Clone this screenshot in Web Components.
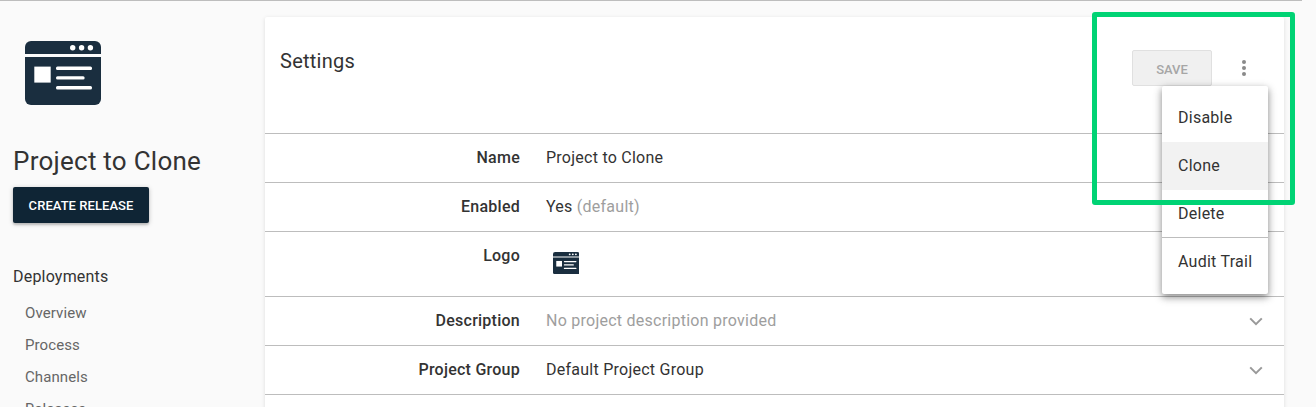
<!DOCTYPE html>
<html lang="en">
<head>
<meta charset="utf-8">
<title>Project to Clone - Settings</title>
<style>
  html, body { margin: 0; height: 407px; overflow: hidden; background: #fafafa; }
  body { font-family: Roboto, "Liberation Sans", sans-serif; color: #333; }
</style>
</head>
<body>
<project-page>
  <project-sidebar slot="side" name="Project to Clone"></project-sidebar>
  <settings-card slot="main" heading="Settings">
    <setting-row label="Name">Project to Clone</setting-row>
    <setting-row label="Enabled">Yes <span style="color:#9e9e9e">(default)</span></setting-row>
    <setting-row label="Logo" tall><project-logo style="width:26.6px;margin:20px 0 0 6.7px"></project-logo></setting-row>
    <setting-row label="Description" expandable><span style="color:#9e9e9e">No project description provided</span></setting-row>
    <setting-row label="Project Group" expandable>Default Project Group</setting-row>
  </settings-card>
</project-page>
<script>
(() => {
  'use strict';

  const define = (name, css, html) => {
    customElements.define(name, class extends HTMLElement {
      constructor() {
        super();
        const root = this.attachShadow({ mode: 'open' });
        root.innerHTML = `<style>${css}</style>${typeof html === 'function' ? html(this) : html}`;
      }
    });
  };

  // window-with-text-lines logo, also used small in the Logo row
  define('project-logo', `
    :host{ display:block; line-height:0; }
    svg{ width:100%; height:auto; display:block; }
  `, `
    <svg viewBox="0 0 76 64" role="img" aria-label="Project logo">
      <path fill="#1a2e3f" d="M0 13V6a6 6 0 0 1 6-6h64a6 6 0 0 1 6 6v7z"/>
      <path fill="#1a2e3f" d="M0 16h76v42a6 6 0 0 1-6 6H6a6 6 0 0 1-6-6z"/>
      <g fill="#fff">
        <circle cx="47.7" cy="6.7" r="2.7"/><circle cx="56.6" cy="6.7" r="2.7"/><circle cx="65.4" cy="6.7" r="2.7"/>
        <rect x="9.3" y="25.6" width="16.4" height="16"/>
        <rect x="31" y="25.6" width="36" height="3.4" rx="1.5"/>
        <rect x="31" y="35.2" width="28.6" height="3.4" rx="1.5"/>
        <rect x="31" y="45" width="36" height="3.4" rx="1.5"/>
      </g>
    </svg>
  `);

  define('project-page', `
    :host{ display:block; width:1302px; height:407px; box-sizing:border-box; border-top:1px solid #bdbdbd; overflow:hidden; position:relative; }
    .wrap{ display:flex; align-items:flex-start; }
    .side{ flex:0 0 265px; }
    .main{ flex:0 0 1019px; padding-top:16px; }
  `, `
    <div class="wrap">
      <div class="side"><slot name="side"></slot></div>
      <div class="main"><slot name="main"></slot></div>
    </div>
  `);

  define('project-sidebar', `
    :host{ display:block; box-sizing:border-box; padding:40px 0 0 13px; }
    project-logo{ width:76px; margin-left:12px; }
    h1{ margin:41px 0 0; font:400 26px/30px Roboto,sans-serif; letter-spacing:.25px; color:#333; white-space:nowrap; }
    button{ display:block; margin-top:11px; width:136px; height:36px; border:0; border-radius:2px; padding:1px 0 0;
      background:#0f2535; color:#fff; font:500 13px/35px Roboto,sans-serif; letter-spacing:.05px;
      box-shadow:0 1px 5px rgba(0,0,0,.22),0 2px 2px rgba(0,0,0,.14); }
    h2{ margin:44px 0 0; font:400 16px/20px Roboto,sans-serif; letter-spacing:.2px; color:#333; }
    ul{ list-style:none; margin:10px 0 0; padding:0 0 0 12px; }
    li{ font:400 15px/32px Roboto,sans-serif; letter-spacing:.1px; color:#666; }
  `, (el) => `
    <project-logo></project-logo>
    <h1>${el.getAttribute('name')}</h1>
    <button>CREATE RELEASE</button>
    <h2>Deployments</h2>
    <ul><li>Overview</li><li>Process</li><li>Channels</li><li>Releases</li></ul>
  `);

  define('settings-card', `
    :host{ display:block; background:#fff; border-radius:2px 2px 0 0; height:400px; position:relative;
      box-shadow:0 1px 4px rgba(0,0,0,.12); }
    header{ display:flex; align-items:flex-start; height:116px; border-bottom:1px solid #bdbdbd; padding:0 16px 0 15px; }
    h3{ margin:31px 0 0; flex:1; font:400 20px/26px Roboto,sans-serif; letter-spacing:.25px; color:#333; }
    .save{ margin-top:33px; width:80px; height:36px; box-sizing:border-box; border:1px solid #e0e0e0; border-radius:2px; padding:3px 0 0;
      background:#f0f0f0; color:#a6a6a6; font:500 13px/31px Roboto,sans-serif; }
    .dots{ margin:33px 0 0 8px; width:48px; height:36px; display:flex; justify-content:center; align-items:center; }
  `, (el) => `
    <header>
      <h3>${el.getAttribute('heading')}</h3>
      <button class="save" disabled>SAVE</button>
      <div class="dots"><svg width="6" height="16" viewBox="0 0 6 16"><g fill="#8a8a8a"><circle cx="3" cy="2" r="2"/><circle cx="3" cy="8" r="2"/><circle cx="3" cy="14" r="2"/></g></svg></div>
    </header>
    <slot></slot>
    <overflow-menu></overflow-menu>
    <highlight-box></highlight-box>
  `);

  define('setting-row', `
    :host{ display:grid; grid-template-columns:255px 1fr 24px; column-gap:26px; height:48px; border-bottom:1px solid #bdbdbd;
      font:400 16px/48px Roboto,sans-serif; letter-spacing:.25px; color:#333; padding-right:16px; }
    :host([tall]){ height:64px; }
    .label{ text-align:right; font-weight:500; white-space:nowrap; }
    :host([tall]) .label{ line-height:47px; }
    .value{ white-space:nowrap; }
    .chev{ display:flex; align-items:center; justify-content:center; }
  `, (el) => `
    <div class="label">${el.getAttribute('label')}</div>
    <div class="value"><slot></slot></div>
    <div class="chev">${el.hasAttribute('expandable')
      ? '<svg width="14" height="9" viewBox="0 0 14 9"><path d="M1.2 1.4 7 7.2l5.8-5.8" fill="none" stroke="#999" stroke-width="2"/></svg>'
      : ''}</div>
  `);

  // open dropdown, lies over the rows
  define('overflow-menu', `
    :host{ display:block; position:absolute; left:897px; top:69px; width:106px; background:#fff; border-radius:2px; padding:8px 0;
      box-shadow:0 3px 10px rgba(0,0,0,.3),0 3px 6px rgba(0,0,0,.22); font:400 16px/48px Roboto,sans-serif; letter-spacing:.25px; color:#333; }
    div{ height:48px; padding-left:16px; white-space:nowrap; }
    .on{ background:#f2f2f2; }
    .sep{ border-bottom:1px solid #bdbdbd; height:47px; }
  `, `
    <div>Disable</div><div class="on">Clone</div><div class="sep">Delete</div><div>Audit Trail</div>
  `);

  // green annotation drawn on top of the screenshot
  define('highlight-box', `
    :host{ display:block; position:absolute; left:827px; top:-5px; width:203px; height:193px; box-sizing:border-box;
      border:5px solid #00d374; border-radius:3px; pointer-events:none; }
  `, ``);
})();
</script>
</body>
</html>
